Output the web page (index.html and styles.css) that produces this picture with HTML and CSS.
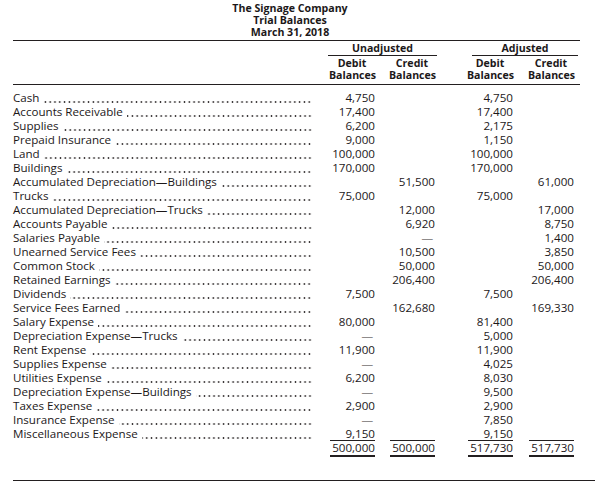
FILE: index.html
```html
<!DOCTYPE html>
<html>
<head>
<meta charset="utf-8">
<link rel="stylesheet" href="styles.css">
</head>
<body>
<div class="page">
  <div class="title">The Signage Company<br>Trial Balances<br>March 31, 2018</div>
  <div class="sheet">
    <div class="head">
      <div class="row grp">
        <div class="g g-u">Unadjusted</div>
        <div class="g g-a">Adjusted</div>
      </div>
      <div class="row sub">
        <div class="lbl"></div>
        <div class="c"><span class="h">Debit<br>Balances</span></div>
        <div class="c"><span class="h">Credit<br>Balances</span></div>
        <div class="c"><span class="h">Debit<br>Balances</span></div>
        <div class="c"><span class="h">Credit<br>Balances</span></div>
      </div>
    </div>
    <div class="body">
      <div class="row"><div class="lbl"><span>Cash</span><span class="lead"></span></div><div class="c"><span class="n">4,750</span></div><div class="c"><span class="n"></span></div><div class="c"><span class="n">4,750</span></div><div class="c"><span class="n"></span></div></div>
      <div class="row"><div class="lbl"><span>Accounts Receivable</span><span class="lead"></span></div><div class="c"><span class="n">17,400</span></div><div class="c"><span class="n"></span></div><div class="c"><span class="n">17,400</span></div><div class="c"><span class="n"></span></div></div>
      <div class="row"><div class="lbl"><span>Supplies</span><span class="lead"></span></div><div class="c"><span class="n">6,200</span></div><div class="c"><span class="n"></span></div><div class="c"><span class="n">2,175</span></div><div class="c"><span class="n"></span></div></div>
      <div class="row"><div class="lbl"><span>Prepaid Insurance</span><span class="lead"></span></div><div class="c"><span class="n">9,000</span></div><div class="c"><span class="n"></span></div><div class="c"><span class="n">1,150</span></div><div class="c"><span class="n"></span></div></div>
      <div class="row"><div class="lbl"><span>Land</span><span class="lead"></span></div><div class="c"><span class="n">100,000</span></div><div class="c"><span class="n"></span></div><div class="c"><span class="n">100,000</span></div><div class="c"><span class="n"></span></div></div>
      <div class="row"><div class="lbl"><span>Buildings</span><span class="lead"></span></div><div class="c"><span class="n">170,000</span></div><div class="c"><span class="n"></span></div><div class="c"><span class="n">170,000</span></div><div class="c"><span class="n"></span></div></div>
      <div class="row"><div class="lbl"><span>Accumulated Depreciation—Buildings</span><span class="lead"></span></div><div class="c"><span class="n"></span></div><div class="c"><span class="n">51,500</span></div><div class="c"><span class="n"></span></div><div class="c"><span class="n">61,000</span></div></div>
      <div class="row"><div class="lbl"><span>Trucks</span><span class="lead"></span></div><div class="c"><span class="n">75,000</span></div><div class="c"><span class="n"></span></div><div class="c"><span class="n">75,000</span></div><div class="c"><span class="n"></span></div></div>
      <div class="row"><div class="lbl"><span>Accumulated Depreciation—Trucks</span><span class="lead"></span></div><div class="c"><span class="n"></span></div><div class="c"><span class="n">12,000</span></div><div class="c"><span class="n"></span></div><div class="c"><span class="n">17,000</span></div></div>
      <div class="row"><div class="lbl"><span>Accounts Payable</span><span class="lead"></span></div><div class="c"><span class="n"></span></div><div class="c"><span class="n">6,920</span></div><div class="c"><span class="n"></span></div><div class="c"><span class="n">8,750</span></div></div>
      <div class="row"><div class="lbl"><span>Salaries Payable</span><span class="lead"></span></div><div class="c"><span class="n"></span></div><div class="c"><span class="n dash">—</span></div><div class="c"><span class="n"></span></div><div class="c"><span class="n">1,400</span></div></div>
      <div class="row"><div class="lbl"><span>Unearned Service Fees</span><span class="lead"></span></div><div class="c"><span class="n"></span></div><div class="c"><span class="n">10,500</span></div><div class="c"><span class="n"></span></div><div class="c"><span class="n">3,850</span></div></div>
      <div class="row"><div class="lbl"><span>Common Stock</span><span class="lead"></span></div><div class="c"><span class="n"></span></div><div class="c"><span class="n">50,000</span></div><div class="c"><span class="n"></span></div><div class="c"><span class="n">50,000</span></div></div>
      <div class="row"><div class="lbl"><span>Retained Earnings</span><span class="lead"></span></div><div class="c"><span class="n"></span></div><div class="c"><span class="n">206,400</span></div><div class="c"><span class="n"></span></div><div class="c"><span class="n">206,400</span></div></div>
      <div class="row"><div class="lbl"><span>Dividends</span><span class="lead"></span></div><div class="c"><span class="n">7,500</span></div><div class="c"><span class="n"></span></div><div class="c"><span class="n">7,500</span></div><div class="c"><span class="n"></span></div></div>
      <div class="row"><div class="lbl"><span>Service Fees Earned</span><span class="lead"></span></div><div class="c"><span class="n"></span></div><div class="c"><span class="n">162,680</span></div><div class="c"><span class="n"></span></div><div class="c"><span class="n">169,330</span></div></div>
      <div class="row"><div class="lbl"><span>Salary Expense</span><span class="lead"></span></div><div class="c"><span class="n">80,000</span></div><div class="c"><span class="n"></span></div><div class="c"><span class="n">81,400</span></div><div class="c"><span class="n"></span></div></div>
      <div class="row"><div class="lbl"><span>Depreciation Expense—Trucks</span><span class="lead"></span></div><div class="c"><span class="n dash">—</span></div><div class="c"><span class="n"></span></div><div class="c"><span class="n">5,000</span></div><div class="c"><span class="n"></span></div></div>
      <div class="row"><div class="lbl"><span>Rent Expense</span><span class="lead"></span></div><div class="c"><span class="n">11,900</span></div><div class="c"><span class="n"></span></div><div class="c"><span class="n">11,900</span></div><div class="c"><span class="n"></span></div></div>
      <div class="row"><div class="lbl"><span>Supplies Expense</span><span class="lead"></span></div><div class="c"><span class="n dash">—</span></div><div class="c"><span class="n"></span></div><div class="c"><span class="n">4,025</span></div><div class="c"><span class="n"></span></div></div>
      <div class="row"><div class="lbl"><span>Utilities Expense</span><span class="lead"></span></div><div class="c"><span class="n">6,200</span></div><div class="c"><span class="n"></span></div><div class="c"><span class="n">8,030</span></div><div class="c"><span class="n"></span></div></div>
      <div class="row"><div class="lbl"><span>Depreciation Expense—Buildings</span><span class="lead"></span></div><div class="c"><span class="n dash">—</span></div><div class="c"><span class="n"></span></div><div class="c"><span class="n">9,500</span></div><div class="c"><span class="n"></span></div></div>
      <div class="row"><div class="lbl"><span>Taxes Expense</span><span class="lead"></span></div><div class="c"><span class="n">2,900</span></div><div class="c"><span class="n"></span></div><div class="c"><span class="n">2,900</span></div><div class="c"><span class="n"></span></div></div>
      <div class="row"><div class="lbl"><span>Insurance Expense</span><span class="lead"></span></div><div class="c"><span class="n dash">—</span></div><div class="c"><span class="n"></span></div><div class="c"><span class="n">7,850</span></div><div class="c"><span class="n"></span></div></div>
      <div class="row last"><div class="lbl"><span>Miscellaneous Expense</span><span class="lead"></span></div><div class="c"><span class="n">9,150</span></div><div class="c"><span class="n"></span></div><div class="c"><span class="n">9,150</span></div><div class="c"><span class="n"></span></div></div>
      <div class="row total"><div class="lbl"></div><div class="c"><span class="n">500,000</span></div><div class="c"><span class="n">500,000</span></div><div class="c"><span class="n">517,730</span></div><div class="c"><span class="n">517,730</span></div></div>
    </div>
  </div>
  <div class="rule-bottom"></div>
</div>
</body>
</html>
```
FILE: styles.css
```css
html, body {
  margin: 0;
  padding: 0;
  background: #ffffff;
}
body {
  font-family: "Open Sans", "Liberation Sans", sans-serif;
  color: #1c1819;
}
.page {
  width: 601px;
  height: 490px;
  overflow: hidden;
}
.title {
  width: 580px;
  text-align: center;
  font-weight: 700;
  font-size: 10.6px;
  line-height: 12px;
  padding-top: 2px;
  height: 39px;
  box-sizing: border-box;
}
.sheet {
  margin-left: 13px;
  width: 567px;
}
.head {
  border-top: 1px solid #231f20;
  border-bottom: 1px solid #231f20;
  margin-top: 1px;
}
.row {
  display: grid;
  grid-template-columns: 299px 63px 60px 78px 61px;
}
.grp {
  font-weight: 700;
  font-size: 10.6px;
  line-height: 13px;
  padding-top: 1px;
}
.g {
  text-align: center;
  border-bottom: 1px solid #231f20;
}
.g-u {
  grid-column: 2 / 4;
  margin-left: 16px;
  margin-right: -2px;
}
.g-a {
  grid-column: 4 / 6;
  margin-left: 37px;
  margin-right: -4px;
}
.sub {
  font-weight: 700;
  font-size: 10.6px;
  line-height: 12px;
  padding-top: 1px;
  padding-bottom: 3px;
}
.c {
  display: flex;
  justify-content: flex-end;
}
.h {
  width: 46px;
  text-align: center;
  white-space: nowrap;
}
.body {
  padding-top: 6px;
  font-size: 11.6px;
  line-height: 14px;
}
.lbl {
  display: flex;
  white-space: nowrap;
  min-width: 0;
}
.lead {
  flex: 1;
  margin-left: 4px;
  background-image: radial-gradient(circle at 2.4px 2px, #3a3637 0.65px, rgba(255, 255, 255, 0) 1.2px);
  background-size: 4.8px 4px;
  background-repeat: repeat-x;
  background-position: right 0 bottom 1px;
}
.n {
  width: 45px;
  text-align: right;
  white-space: nowrap;
  display: block;
}
.dash {
  color: #8e8b8b;
  padding-right: 2px;
  box-sizing: border-box;
}
.last .n {
  border-bottom: 1px solid #231f20;
  height: 13px;
}
.total .n {
  border-bottom: 2px solid #231f20;
  height: 14px;
}
.rule-bottom {
  margin-left: 13px;
  width: 582px;
  border-top: 1px solid #231f20;
  margin-top: 23px;
}
```
